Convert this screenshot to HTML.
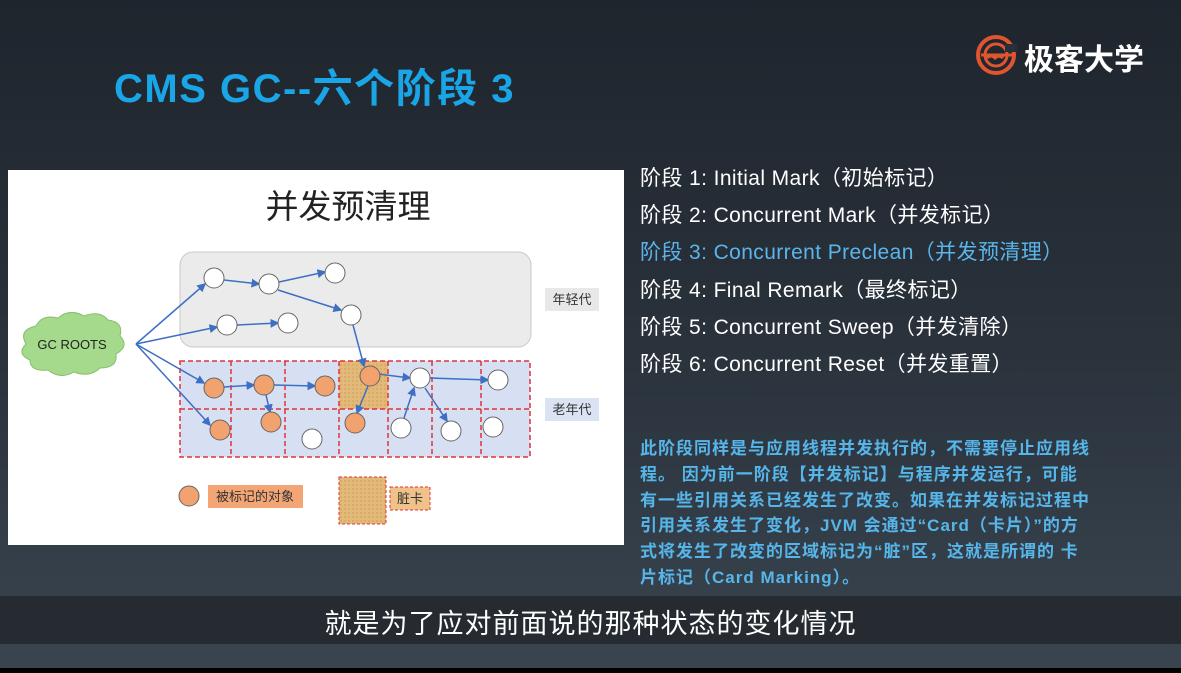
<!DOCTYPE html>
<html><head><meta charset="utf-8"><style>
html,body{margin:0;padding:0}
body{width:1181px;height:673px;position:relative;overflow:hidden;background:linear-gradient(180deg,#1f252d 0%,#283039 45%,#3a4550 100%);font-family:"Liberation Sans","Noto Sans CJK SC",sans-serif}
.t{position:absolute;white-space:nowrap}
#title{left:114px;top:56px;font-size:40px;font-weight:bold;color:#1aa6e6;letter-spacing:1.5px}
#logo{left:1024px;top:35px;font-size:30px;font-weight:bold;color:#fff}
.st{left:640px;font-size:21px;color:#fff;letter-spacing:0.4px}
.bp{left:640px;font-size:17px;font-weight:bold;color:#56b6ea;line-height:25.8px;letter-spacing:1px}
#sub{left:0;top:596px;width:1181px;height:48px;background:#262b31}
#subt{left:0;width:1181px;text-align:center;top:602px;font-size:27px;color:#fff;letter-spacing:1px}
#bot{left:0;top:668px;width:1181px;height:5px;background:#000}
</style></head><body>
<div class="t" id="title">CMS GC--六个阶段 3</div>
<svg class="t" style="left:975px;top:34px" width="46" height="42" viewBox="0 0 46 42">
<circle cx="21" cy="21" r="18" fill="none" stroke="#e0552f" stroke-width="4"/>
<circle cx="21" cy="21" r="11" fill="none" stroke="#e0552f" stroke-width="3"/>
<rect x="30" y="10" width="12" height="8" fill="#27303a"/>
<path d="M6 21 H40 M12 24 q4 -4 8 0 q4 -4 8 0" stroke="#e0552f" stroke-width="3" fill="none"/>
</svg>
<div class="t" id="logo">极客大学</div>

<svg class="t" style="left:8px;top:170px" width="616" height="375" viewBox="8 170 616 375">
<defs><marker id="a" markerWidth="6" markerHeight="6" refX="5" refY="3" orient="auto"><path d="M0 0 L6 3 L0 6z" fill="#3d6fc4"/></marker>
<pattern id="p" width="4" height="4" patternUnits="userSpaceOnUse"><rect width="4" height="4" fill="#e2b978"/><rect width="2" height="2" fill="#d9ad68"/></pattern></defs>
<rect x="8" y="170" width="616" height="375" fill="#fff"/>
<text x="348" y="218" font-size="33" text-anchor="middle" fill="#222" font-family="Noto Sans CJK SC,sans-serif">并发预清理</text>
<rect x="180" y="252" width="351" height="95" rx="13" fill="#ebebeb" stroke="#c8c8c8"/>
<rect x="180" y="361" width="350" height="96" fill="#d6e0f2"/>
<rect x="339" y="361" width="49" height="48" fill="url(#p)"/>
<g stroke="#e0333a" stroke-width="1.5" stroke-dasharray="5,3" fill="none">
<rect x="180" y="361" width="350" height="96"/>
<path d="M180 409 H530 M231 361 V457 M285 361 V457 M339 361 V457 M388 361 V457 M432 361 V457 M481 361 V457"/>
</g>
<path d="M26 344 q-8 -14 10 -18 q6 -12 22 -8 q12 -10 26 -2 q16 -6 24 4 q16 2 12 16 q10 10 -4 18 q2 14 -16 14 q-10 10 -26 4 q-14 8 -26 -2 q-18 2 -18 -10 q-14 -6 -4 -16z" fill="#a5d98c" stroke="#86c06a"/>
<text x="72" y="349" font-size="13" text-anchor="middle" fill="#222">GC ROOTS</text>
<g stroke="#3d6fc4" stroke-width="1.5" fill="none" marker-end="url(#a)">
<path d="M136 344 L205 284"/><path d="M136 344 L217 327"/><path d="M136 344 L204 383"/><path d="M136 344 L210 425"/>
<path d="M224 280 L259 284"/><path d="M279 282 L325 272"/><path d="M278 290 L341 310"/><path d="M237 325 L278 323"/>
<path d="M353 325 L364 366"/>
<path d="M224 387 L254 385"/><path d="M274 385 L315 386"/><path d="M266 395 L270 412"/>
<path d="M378 374 L410 378"/><path d="M368 386 L357 413"/><path d="M430 378 L488 380"/>
<path d="M404 418 L414 388"/><path d="M425 388 L447 421"/>
</g>
<g stroke="#666" stroke-width="1">
<g fill="#fff"><circle cx="214" cy="278" r="10"/><circle cx="269" cy="284" r="10"/><circle cx="335" cy="273" r="10"/><circle cx="351" cy="315" r="10"/><circle cx="227" cy="325" r="10"/><circle cx="288" cy="323" r="10"/>
<circle cx="420" cy="378" r="10"/><circle cx="498" cy="380" r="10"/><circle cx="312" cy="439" r="10"/><circle cx="401" cy="428" r="10"/><circle cx="451" cy="431" r="10"/><circle cx="493" cy="427" r="10"/></g>
<g fill="#f2a26e"><circle cx="214" cy="388" r="10"/><circle cx="264" cy="385" r="10"/><circle cx="325" cy="386" r="10"/><circle cx="370" cy="376" r="10"/><circle cx="220" cy="430" r="10"/><circle cx="271" cy="422" r="10"/><circle cx="355" cy="423" r="10"/><circle cx="189" cy="496" r="10"/></g>
</g>
<rect x="545" y="288" width="54" height="23" fill="#e8e8e8"/>
<text x="572" y="304" font-size="13" text-anchor="middle" fill="#333">年轻代</text>
<rect x="545" y="398" width="54" height="23" fill="#dbe3f3"/>
<text x="572" y="414" font-size="13" text-anchor="middle" fill="#333">老年代</text>
<rect x="208" y="485" width="95" height="23" fill="#f4a576"/>
<text x="255" y="501" font-size="13" text-anchor="middle" fill="#333">被标记的对象</text>
<rect x="339" y="477" width="47" height="47" fill="url(#p)" stroke="#e0333a" stroke-dasharray="3,2"/>
<rect x="390" y="487" width="40" height="23" fill="#eec288" stroke="#e0333a" stroke-dasharray="3,2"/>
<text x="410" y="503" font-size="13" text-anchor="middle" fill="#333">脏卡</text>
</svg>

<div class="t st" style="top:162px">阶段 1: Initial Mark（初始标记）</div>
<div class="t st" style="top:199px">阶段 2: Concurrent Mark（并发标记）</div>
<div class="t st" style="top:236px;color:#5bb5ea">阶段 3: Concurrent Preclean（并发预清理）</div>
<div class="t st" style="top:274px">阶段 4: Final Remark（最终标记）</div>
<div class="t st" style="top:311px">阶段 5: Concurrent Sweep（并发清除）</div>
<div class="t st" style="top:348px">阶段 6: Concurrent Reset（并发重置）</div>

<div class="t bp" style="top:436px">此阶段同样是与应用线程并发执行的，不需要停止应用线<br>程。 因为前一阶段【并发标记】与程序并发运行，可能<br>有一些引用关系已经发生了改变。如果在并发标记过程中<br>引用关系发生了变化，JVM 会通过“Card（卡片）”的方<br>式将发生了改变的区域标记为“脏”区，这就是所谓的 卡<br>片标记（Card Marking）。</div>

<div class="t" id="sub"></div>
<div class="t" id="subt">就是为了应对前面说的那种状态的变化情况</div>
<div class="t" id="bot"></div>
</body></html>
